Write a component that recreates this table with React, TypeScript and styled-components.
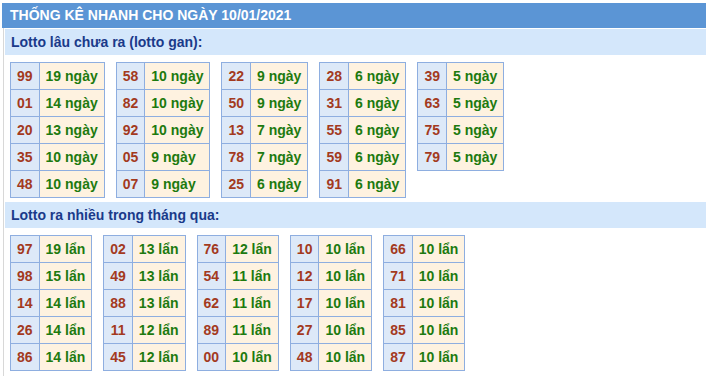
import React from 'react';
import styled, { createGlobalStyle } from 'styled-components';

const GlobalStyle = createGlobalStyle`
  body {
    margin: 0;
    background: #fff;
    font-family: "Liberation Sans", Arial, sans-serif;
  }
`;

type Entry = [string, string];

const ganTables: Entry[][] = [
  [['99', '19'], ['01', '14'], ['20', '13'], ['35', '10'], ['48', '10']],
  [['58', '10'], ['82', '10'], ['92', '10'], ['05', '9'], ['07', '9']],
  [['22', '9'], ['50', '9'], ['13', '7'], ['78', '7'], ['25', '6']],
  [['28', '6'], ['31', '6'], ['55', '6'], ['59', '6'], ['91', '6']],
  [['39', '5'], ['63', '5'], ['75', '5'], ['79', '5']],
];

const hotTables: Entry[][] = [
  [['97', '19'], ['98', '15'], ['14', '14'], ['26', '14'], ['86', '14']],
  [['02', '13'], ['49', '13'], ['88', '13'], ['11', '12'], ['45', '12']],
  [['76', '12'], ['54', '11'], ['62', '11'], ['89', '11'], ['00', '10']],
  [['10', '10'], ['12', '10'], ['17', '10'], ['27', '10'], ['48', '10']],
  [['66', '10'], ['71', '10'], ['81', '10'], ['85', '10'], ['87', '10']],
];

const Section = ({ title, tables, unit }: { title: string; tables: Entry[][]; unit: string }) => (
  <>
    <SubTitle>{title}</SubTitle>
    <TableRow>
      {tables.map((rows, i) => (
        <LotoTable key={i}>
          <tbody>
            {rows.map(([num, count]) => (
              <tr key={num}>
                <NumCell>{num}</NumCell>
                <CountCell>{count} {unit}</CountCell>
              </tr>
            ))}
          </tbody>
        </LotoTable>
      ))}
    </TableRow>
  </>
);

const App = () => (
  <Wrapper>
    <GlobalStyle />
    <TitleBar>THỐNG KÊ NHANH CHO NGÀY 10/01/2021</TitleBar>
    <Box>
      <Section title="Lotto lâu chưa ra (lotto gan):" tables={ganTables} unit="ngày" />
      <Section title="Lotto ra nhiều trong tháng qua:" tables={hotTables} unit="lẩn" />
    </Box>
  </Wrapper>
);

const Wrapper = styled.div`
  padding: 3px 0 0 2px;
`;

const TitleBar = styled.div`
  height: 25px;
  line-height: 25px;
  background: #5b95d5;
  color: #fff;
  font-weight: bold;
  font-size: 14px;
  padding-left: 8px;
`;

const Box = styled.div`
  border-left: 1px solid #d8d8d8;
  border-bottom: 1px solid #d8d8d8;
  margin-left: 1px;
  padding: 1px 0 1px 1px;
`;

const SubTitle = styled.div`
  height: 26px;
  line-height: 27px;
  background: #d4e7fb;
  color: #1a3a8a;
  font-weight: bold;
  font-size: 14px;
  padding-left: 6px;
`;

const TableRow = styled.div`
  display: flex;
  align-items: flex-start;
  gap: 11px;
  padding: 7px 0 4px 5px;
`;

const LotoTable = styled.table`
  border-collapse: collapse;
  font-size: 14px;
  font-weight: bold;
  td {
    border: 1px solid #8eaee0;
    height: 16px;
    padding: 5px 6px;
    line-height: 16px;
    white-space: nowrap;
  }
`;

const NumCell = styled.td`
  background: #dde9f8;
  color: #a33a1e;
  text-align: center;
`;

const CountCell = styled.td`
  background: #fef2e0;
  color: #1d7a0f;
`;

export default App;
